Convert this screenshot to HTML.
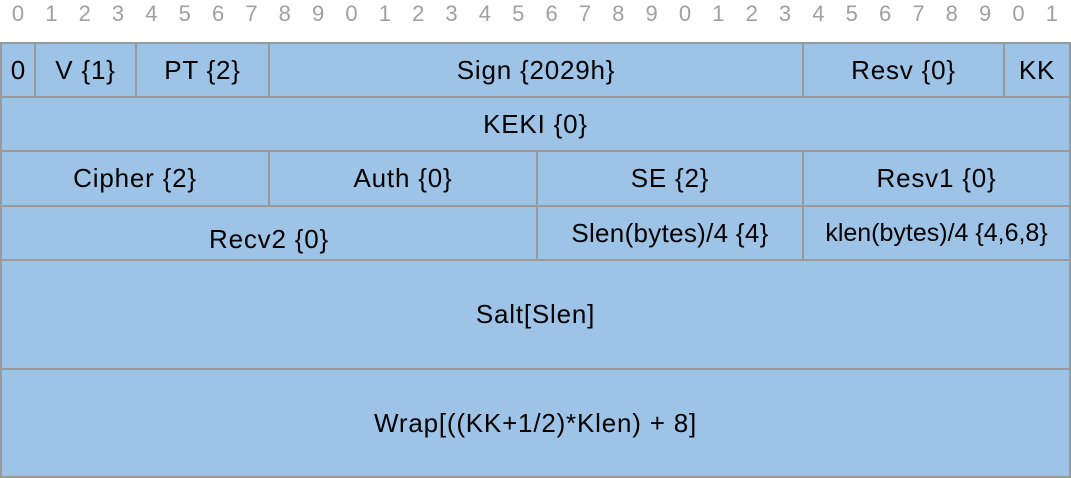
<!DOCTYPE html>
<html><head><style>
body{margin:0;width:1071px;height:478px;background:#fff;position:relative;overflow:hidden;font-family:"Liberation Sans",sans-serif}
.n{position:absolute;top:1px;width:20px;margin-left:-10px;text-align:center;font-size:22px;color:#a0a0a0}
.c{position:absolute;box-sizing:border-box;background:#9dc3e6;border:2px solid #999;display:flex;align-items:center;justify-content:center;font-size:26px;color:#000;white-space:nowrap;letter-spacing:0.8px}
</style></head><body>
<div id="nums"></div>
<script>
var h='';for(var i=0;i<32;i++){h+='<div class="n" style="left:'+(18+33.35*i)+'px">'+(i%10)+'</div>';}
document.getElementById('nums').innerHTML=h;
</script>
<div class="c" style="left:0;top:42px;width:36px;height:56px;letter-spacing:0">0</div>
<div class="c" style="left:34px;top:42px;width:103px;height:56px">V {1}</div>
<div class="c" style="left:135px;top:42px;width:135px;height:56px">PT {2}</div>
<div class="c" style="left:268px;top:42px;width:536px;height:56px">Sign {2029h}</div>
<div class="c" style="left:802px;top:42px;width:203px;height:56px">Resv {0}</div>
<div class="c" style="left:1003px;top:42px;width:68px;height:56px">KK</div>
<div class="c" style="left:0;top:96px;width:1071px;height:56px">KEKI {0}</div>
<div class="c" style="left:0;top:150px;width:270px;height:57px">Cipher {2}</div>
<div class="c" style="left:268px;top:150px;width:270px;height:57px">Auth {0}</div>
<div class="c" style="left:536px;top:150px;width:268px;height:57px">SE {2}</div>
<div class="c" style="left:802px;top:150px;width:269px;height:57px">Resv1 {0}</div>
<div class="c" style="left:0;top:205px;width:538px;height:56px;padding-top:12px">Recv2 {0}</div>
<div class="c" style="left:536px;top:205px;width:268px;height:56px;letter-spacing:0.3px">Slen(bytes)/4 {4}</div>
<div class="c" style="left:802px;top:205px;width:269px;height:56px;font-size:25px;letter-spacing:0">klen(bytes)/4 {4,6,8}</div>
<div class="c" style="left:0;top:259px;width:1071px;height:111px">Salt[Slen]</div>
<div class="c" style="left:0;top:368px;width:1071px;height:110px">Wrap[((KK+1/2)*Klen) + 8]</div>
</body></html>
